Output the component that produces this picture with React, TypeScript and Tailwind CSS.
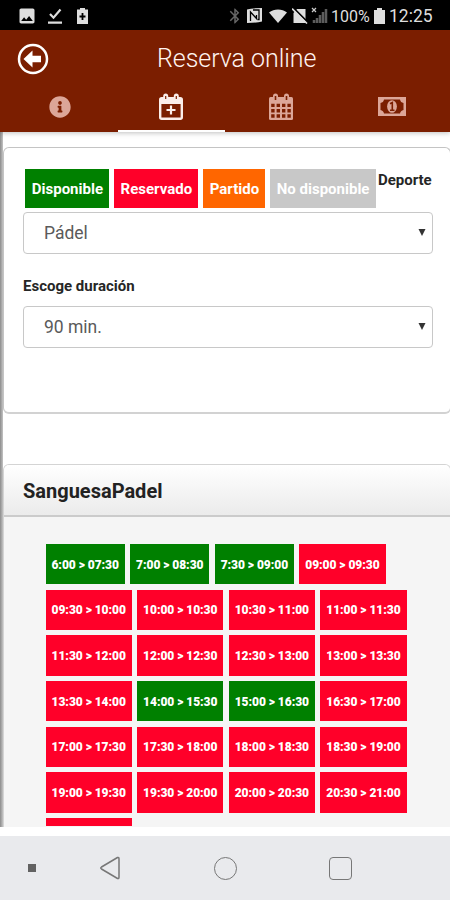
import type { ReactNode } from 'react';
import { MdBluetooth, MdImage } from 'react-icons/md';
import { FaInfoCircle } from 'react-icons/fa';

const freeSlots = ['6:00 > 07:30', '7:00 > 08:30', '7:30 > 09:00', '14:00 > 15:30', '15:00 > 16:30'];

// one array per line of buttons
const slotRows = [
  ['6:00 > 07:30', '7:00 > 08:30', '7:30 > 09:00', '09:00 > 09:30'],
  ['09:30 > 10:00', '10:00 > 10:30', '10:30 > 11:00', '11:00 > 11:30'],
  ['11:30 > 12:00', '12:00 > 12:30', '12:30 > 13:00', '13:00 > 13:30'],
  ['13:30 > 14:00', '14:00 > 15:30', '15:00 > 16:30', '16:30 > 17:00'],
  ['17:00 > 17:30', '17:30 > 18:00', '18:00 > 18:30', '18:30 > 19:00'],
  ['19:00 > 19:30', '19:30 > 20:00', '20:00 > 20:30', '20:30 > 21:00'],
];

function StatusBar() {
  return (
    <div className="flex h-[30px] shrink-0 items-center bg-black pt-px text-[#dedede]">
      <MdImage className="ml-[17px] size-5" />
      <svg viewBox="0 0 14 16" className="ml-[11px] h-4 w-[14px]" fill="none" stroke="currentColor" strokeWidth="2.2">
        <path d="M2 6l3.5 3.7L12.5 1.5M0 14.6h14" />
      </svg>
      <svg viewBox="0 0 11 16" className="ml-[15px] h-4 w-[11px]">
        <path d="M3 0h5v1.5h3V16H0V1.5h3z" fill="currentColor" />
        <path d="M5.5 5v7M2.5 8.5h6" stroke="#000" strokeWidth="1.8" />
      </svg>
      <div className="ml-auto flex items-center pr-[18px]">
        <MdBluetooth className="size-[18px] text-[#666]" />
        <svg viewBox="0 0 15 15" className="ml-[3px] size-[15px]">
          <path d="M0 1.500Q5 0 15 0v13.500Q10 15 0 15z" fill="currentColor" />
          <path d="M3.5 13V4l6 6.5V7M6 2h6v9.500h-1.500" fill="none" stroke="#000" strokeWidth="1.3" />
        </svg>
        <svg viewBox="0 0 18 14" className="ml-[7px] h-[14px] w-[18px]" fill="currentColor">
          <path d="M0 3.4C5-.6 13-.6 18 3.4L9 14z" />
        </svg>
        <svg viewBox="0 0 16 16" className="ml-[5px] size-4">
          <path d="M5 1h8.5v14H1.5V5z" fill="currentColor" />
          <path d="M1.5 0l14 14" stroke="#000" strokeWidth="1.8" />
          <path d="M0 .5l15 15" stroke="currentColor" strokeWidth="1.6" />
        </svg>
        <svg viewBox="0 0 17 17" className="ml-[3px] size-[17px]">
          <path d="M1 1l4 4M5 1L1 5" stroke="#ccc" strokeWidth="1.2" />
          <path d="M3 16v-3M6 16v-5M9 16V8M12 16V5M15 16V2" stroke="#5c5c5c" strokeWidth="2.5" />
        </svg>
        <span className="mt-[3px] ml-[3px] w-[41px] text-[16px] leading-none whitespace-nowrap">100%</span>
        <svg viewBox="0 0 11 16" className="ml-[2px] h-4 w-[11px]" fill="currentColor">
          <path d="M3 0h5v2h3v14H0V2h3z" />
        </svg>
        <span className="mt-[3px] ml-[4px] w-[43px] text-[17.5px] leading-none whitespace-nowrap">12:25</span>
      </div>
    </div>
  );
}

function CalendarPlusIcon() {
  return (
    <svg viewBox="0 0 26 28" className="h-[28px] w-[26px]">
      <rect x="2.2" y="5.2" width="21.6" height="20.6" rx="1.5" fill="none" stroke="currentColor" strokeWidth="2.4" />
      <path d="M2 5h22v6H2z" fill="currentColor" />
      <rect x="5.2" y=".5" width="5" height="7.5" rx="2.5" fill="currentColor" />
      <rect x="15.8" y=".5" width="5" height="7.5" rx="2.5" fill="currentColor" />
      <path d="M7.7 3v3M18.3 3v3" stroke="#7b1e00" strokeWidth="1.2" />
      <path d="M13 12.5v9M8.5 17h9" stroke="currentColor" strokeWidth="2.2" />
    </svg>
  );
}

function CalendarGridIcon() {
  return (
    <svg viewBox="0 0 26 28" className="h-[28px] w-[26px]">
      <rect x="1" y="4" width="24" height="23" rx="1.5" fill="currentColor" />
      <rect x="5" y=".5" width="5" height="8" rx="2.5" fill="currentColor" />
      <rect x="16" y=".5" width="5" height="8" rx="2.5" fill="currentColor" />
      <path d="M7.5 3v4M18.5 3v4" stroke="#7b1e00" strokeWidth="1.6" />
      {/* 4x3 day cells */}
      <path
        d="M3.200 12.400H22.800M3.200 17.700H22.800M3.200 23H22.800"
        stroke="#7b1e00"
        strokeWidth="3.4"
        strokeDasharray="3.4 2"
      />
    </svg>
  );
}

function MoneyIcon() {
  return (
    <svg viewBox="0 0 28 19" className="h-[19px] w-[28px]">
      <path d="M0 0h28v19H0z" fill="currentColor" />
      <path d="M6 2.5h16q.5 3 3.5 3.5v7q-3 .5-3.5 3.5H6q-.5-3-3.5-3.5V6q3-.5 3.5-3.5z" fill="#7b1e00" />
      <ellipse cx="14" cy="9.5" rx="4.9" ry="6.3" fill="currentColor" />
      <path d="M12 6.8l2.3-1.3v8M12 13.3h4.5" fill="none" stroke="#7b1e00" strokeWidth="1.6" />
    </svg>
  );
}

function Tab({ active, children }: { active?: boolean; children: ReactNode }) {
  return (
    <div className={active ? 'flex items-center justify-center border-b-2 border-white pb-[3px] text-[#fbeeea]' : 'flex items-center justify-center pb-[5px] text-[#dca698]'}>
      {children}
    </div>
  );
}

function Header() {
  return (
    <header className="relative z-10 flex h-[102px] shrink-0 flex-col bg-[#7b1e00] shadow-[0_1px_5px_rgba(0,0,0,0.25)]">
      <div className="flex h-[56px] items-center">
        <svg viewBox="0 0 32 32" className="mt-[2px] ml-[17px] size-8">
          <circle cx="16" cy="16" r="14" fill="none" stroke="#fff" strokeWidth="2.5" />
          <path d="M6.5 16l9-8.5v5.3h8.5v6.4h-8.5v5.3z" fill="#fff" />
        </svg>
        <h1 className="mt-px ml-[108px] text-[25px] font-light tracking-[-0.05px] whitespace-nowrap text-[#fff4f0]">Reserva online</h1>
      </div>
      <nav className="grid h-[46px] grid-cols-[118px_107px_111px_111px]">
        <Tab>
          <FaInfoCircle className="ml-[2px] size-[22px]" />
        </Tab>
        <Tab active>
          <span className="-ml-px">
            <CalendarPlusIcon />
          </span>
        </Tab>
        <Tab>
          <CalendarGridIcon />
        </Tab>
        <Tab>
          <MoneyIcon />
        </Tab>
      </nav>
    </header>
  );
}

function Select({ value }: { value: string }) {
  return (
    <div className="flex h-[42px] w-[410px] items-center justify-between rounded-[4px] border border-[#c8c8c8] bg-white pr-[6px] pl-[20px] text-[17.5px] text-[#5a5a5a]">
      <span>{value}</span>
      <svg viewBox="0 0 8 7" className="mb-px h-[7px] w-2" fill="#333">
        <path d="M.5 0h7L4 7z" />
      </svg>
    </div>
  );
}

function Filters() {
  return (
    <section className="-mr-px h-[267px] shrink-0 rounded-[6px] border border-b-2 border-[#c4c4c4] border-b-[#d2d2d2] bg-white pt-[21px] pl-[19px]">
      <div className="flex h-[43px] gap-[5px] pl-[2.4px] text-[15px] font-bold whitespace-nowrap text-white">
        <span className="flex h-[39px] w-[84px] items-center justify-center bg-[#008000] pt-[2px]">Disponible</span>
        <span className="flex h-[39px] w-[84px] items-center justify-center bg-[#ff0029] pt-[2px]">Reservado</span>
        <span className="flex h-[39px] w-[62px] items-center justify-center bg-[#ff6600] pt-[2px]">Partido</span>
        <span className="flex h-[39px] w-[105.500px] items-center justify-center bg-[#c8c8c8] pt-[2px]">No disponible</span>
        <span className="-ml-[3px] text-[#262626]">Deporte</span>
      </div>
      <Select value="Pádel" />
      <p className="mt-[21px] mb-[9px] text-[15px] leading-[22px] font-bold text-[#262626]">Escoge duración</p>
      <Select value="90 min." />
    </section>
  );
}

function Slot({ time }: { time: string }) {
  const color = freeSlots.includes(time) ? 'bg-[#008000]' : 'bg-[#ff0029]';
  // hours without the leading zero get a narrower button
  const width = time.length < 13 ? 'w-[79.4px]' : 'w-[86.4px]';
  return (
    <button className={`flex h-[40.4px] shrink-0 items-center justify-center pt-px text-[12px] font-black tracking-[-0.05px] whitespace-nowrap text-white ${color} ${width}`}>
      {time}
    </button>
  );
}

function Court() {
  return (
    <section className="-mr-px flex min-h-0 grow flex-col overflow-hidden rounded-t-[6px] border border-b-0 border-[#d4d4d4] bg-[#f5f5f5]">
      <h2 className="h-[52px] shrink-0 border-b-2 border-[#cbcbcb] bg-linear-to-b from-white to-[#ebebeb] pl-[19px] text-[20px] leading-[52px] font-bold text-[#222]">
        SanguesaPadel
      </h2>
      <div className="flex flex-col gap-[5.25px] pt-[27px] pl-[41.5px]">
        {slotRows.map((row) => (
          <div key={row[0]} className="flex gap-[5.2px]">
            {row.map((time) => (
              <Slot key={time} time={time} />
            ))}
          </div>
        ))}
        {/* top edge of the next line, the rest is below the fold */}
        <div className="h-[8px] w-[86.4px] bg-[#ff0029]" />
      </div>
    </section>
  );
}

function NavBar() {
  return (
    <footer className="flex h-[73px] shrink-0 items-center border-t-[9px] border-white bg-[#e9eaed]">
      <span className="ml-[28px] size-[8px] bg-[#626262]" />
      <svg viewBox="0 0 22 24" className="ml-[63px] h-6 w-[22px]" fill="none" stroke="#777" strokeWidth="1.5">
        <path d="M18.5 1.5L2.5 11q-1.5 1 0 2l16 9.5q1.5.5 1.5-1.5V3q0-2-1.5-1.5z" />
      </svg>
      <span className="ml-[93px] size-[23px] rounded-full border-[1.5px] border-[#777]" />
      <span className="ml-[92px] size-[23px] rounded-[4px] border-[1.5px] border-[#777]" />
    </footer>
  );
}

export default function App() {
  return (
    <div className="flex h-[900px] w-[450px] flex-col overflow-hidden bg-white font-['Roboto',sans-serif]">
      <StatusBar />
      <Header />
      <main className="flex min-h-0 grow">
        <div className="w-[3px] shrink-0 bg-linear-to-r from-[#8c8c8c] to-[#c4c4c4]" />
        <div className="flex min-w-0 grow flex-col gap-[50px] pt-[15px]">
          <Filters />
          <Court />
        </div>
      </main>
      <NavBar />
    </div>
  );
}
